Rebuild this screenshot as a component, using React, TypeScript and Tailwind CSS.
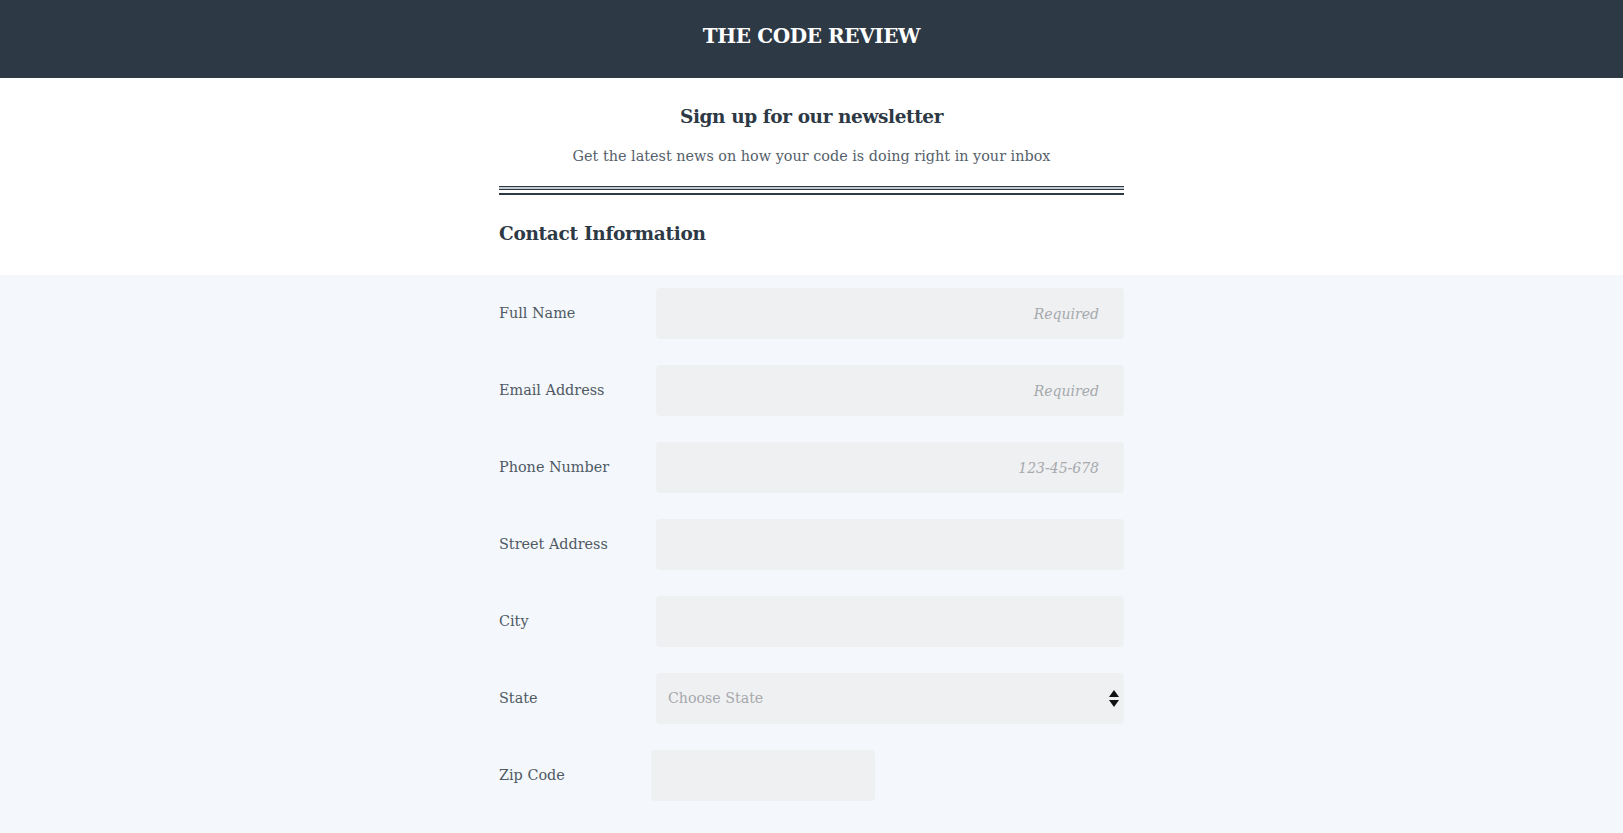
import { ChangeEvent, useState } from "react";

const fields = [
  { label: "Full Name", placeholder: "Required", type: "text" },
  { label: "Email Address", placeholder: "Required", type: "email" },
  { label: "Phone Number", placeholder: "123-45-678", type: "tel" },
  { label: "Street Address", placeholder: "", type: "text" },
  { label: "City", placeholder: "", type: "text" },
];

const inputClass =
  "h-[51px] w-full rounded-[4px] bg-[#eff0f2] px-[25px] text-right text-[14px] text-[#2d3945] outline-none placeholder:italic placeholder:text-[#a6a9ad]";

const App = () => {
  const [values, setValues] = useState<Record<string, string>>({});
  const [state, setState] = useState("");

  const update = (key: string) => (e: ChangeEvent<HTMLInputElement>) =>
    setValues({ ...values, [key]: e.target.value });

  return (
    <div className="min-h-screen bg-[#f4f7fb] font-['DejaVu_Serif',serif]">
      <header className="flex h-[78px] items-center justify-center bg-[#2d3945] pb-[6px]">
        <h1 className="text-[20px] font-bold tracking-[-0.4px] text-white">
          THE CODE REVIEW
        </h1>
      </header>

      <section className="bg-white">
        <div className="mx-auto w-[625px] pt-[24px] pb-[26px]">
          <h2 className="text-center text-[18.5px] leading-[30px] font-bold tracking-[-0.4px] text-[#2d3945]">
            Sign up for our newsletter
          </h2>
          <p className="mt-[12px] text-center text-[14.4px] leading-[24px] text-[#56616b]">
            Get the latest news on how your code is doing right in your inbox
          </p>
          <div className="mt-[18px]">
            <div className="h-[4px] border-y border-[#2d3945] bg-[#c5cad0]" />
            <div className="mt-[3px] h-[2px] bg-[#2d3945]" />
          </div>
          <h3 className="mt-[24px] text-[18.5px] leading-[30px] font-bold tracking-[-0.3px] text-[#2d3945]">
            Contact Information
          </h3>
        </div>
      </section>

      <form className="mx-auto flex w-[625px] flex-col gap-[26px] pt-[13px] pb-[32px]">
        {fields.map((f) => (
          <div key={f.label} className="flex items-center">
            <label className="w-[157px] shrink-0 text-[14.4px] text-[#4f5a64]">
              {f.label}
            </label>
            <input
              type={f.type}
              placeholder={f.placeholder}
              value={values[f.label] || ""}
              onChange={update(f.label)}
              className={inputClass}
            />
          </div>
        ))}

        <div className="flex items-center">
          <label className="w-[157px] shrink-0 text-[14.4px] text-[#4f5a64]">
            State
          </label>
          <div className="relative w-full">
            <select
              value={state}
              onChange={(e) => setState(e.target.value)}
              className={`h-[51px] w-full appearance-none rounded-[4px] bg-[#eff0f2] px-[12px] text-[14.2px] outline-none ${
                state ? "text-[#2d3945]" : "text-[#a6a9ad]"
              }`}
            >
              <option value="">Choose State</option>
              <option value="CA">California</option>
              <option value="NY">New York</option>
              <option value="TX">Texas</option>
            </select>
            <svg
              className="pointer-events-none absolute top-1/2 right-[4px] -translate-y-1/2"
              width="12"
              height="20"
              viewBox="0 0 12 20"
            >
              <path d="M6 1 L11 8 L1 8 Z" fill="#111" />
              <path d="M1 11 L11 11 L6 18 Z" fill="#111" />
            </svg>
          </div>
        </div>

        <div className="flex items-center">
          <label className="w-[152px] shrink-0 text-[14.4px] text-[#4f5a64]">
            Zip Code
          </label>
          <input
            type="text"
            value={values.zip || ""}
            onChange={update("zip")}
            className="h-[51px] w-[224px] rounded-[4px] bg-[#eff0f2] px-[12px] text-[14px] outline-none"
          />
        </div>
      </form>
    </div>
  );
};

export default App;
